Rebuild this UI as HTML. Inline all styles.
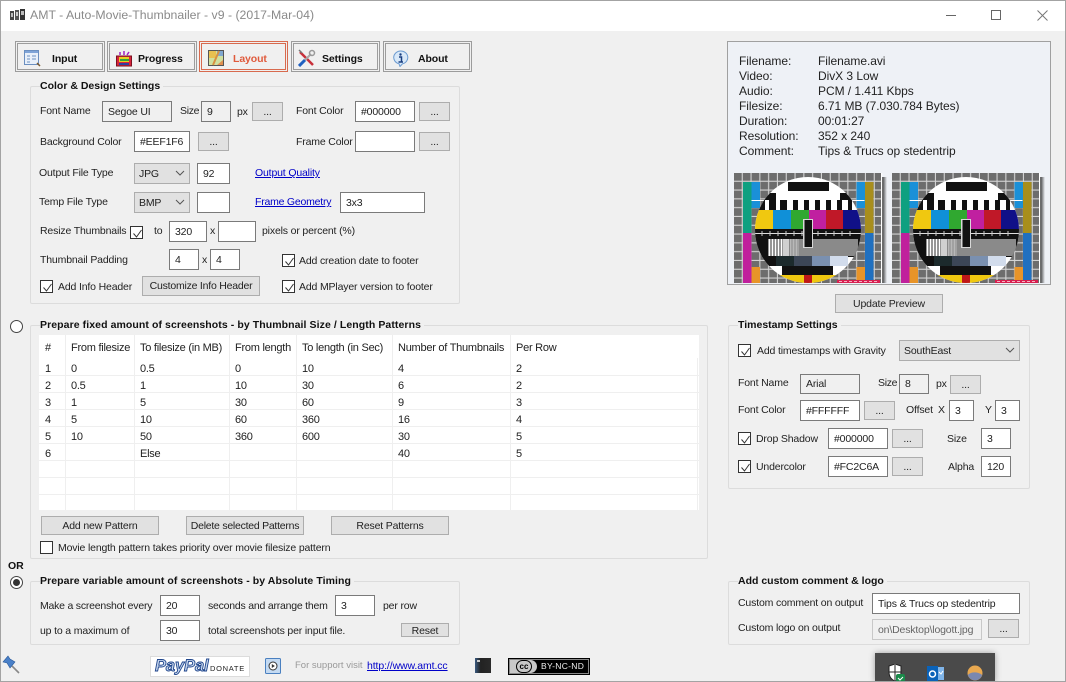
<!DOCTYPE html>
<html><head><meta charset="utf-8"><title>AMT</title>
<style>
html,body{margin:0;padding:0}
body{width:1066px;height:682px;overflow:hidden;position:relative;background:#f0f0f0;font:10.5px/14px "Liberation Sans",sans-serif;letter-spacing:-.16px;color:#222}
#win{position:absolute;left:0;top:0;width:1066px;height:682px;box-sizing:border-box;border:1px solid #a3a3a3;pointer-events:none}
#tb{position:absolute;left:0;top:0;width:1066px;height:31px;background:#fff}
.t,.g,.i,.b,.s,.c,.r,.tab,.a{position:absolute;box-sizing:border-box;white-space:nowrap}
.t{margin-top:1px}
.g{border:1px solid #dcdcdc;border-radius:2px}
.h{position:absolute;left:9px;top:-8px;background:#f0f0f0;font-weight:bold;font-size:10.5px;letter-spacing:0;line-height:14px;color:#111;padding-right:3px;white-space:nowrap}
.i{background:#fff;border:1px solid #7a7a7a;padding-left:5px;line-height:20px;color:#222;height:21px}
.ro{background:#f0f0f0}
.b{background:#e1e1e1;border:1px solid #adadad;text-align:center;height:19px;line-height:18px;color:#222}
.s{background:#e1e1e1;border:1px solid #adadad;padding-left:4px;height:21px;line-height:21px}
.s svg{position:absolute;right:4px;top:6px}
.c{width:13px;height:13px;border:1px solid #333;background:#fff}
.c svg{position:absolute;left:1px;top:1px}
.r{width:13px;height:13px;border:1px solid #444;border-radius:50%;background:#fff}
.tab{height:31px;border:1px solid #9c9c9c;padding:0}
.tab div{position:absolute;left:1px;top:1px;right:1px;bottom:1px;border:1px solid #9c9c9c;background:#f0f0f0}
.tab b{position:absolute;top:8px;font-size:10.5px;letter-spacing:-.1px;color:#111}
.tab svg{position:absolute;top:6px}
a{color:#0000c8;text-decoration:underline}
.cell{position:absolute;line-height:14px;white-space:nowrap;color:#222;font-size:11px;letter-spacing:-.25px;margin-top:1px}
</style></head><body>
<div id="tb"></div>

<svg class="a" style="left:10px;top:9px" width="15" height="12" viewBox="0 0 15 12"><rect x="0" y="2" width="4" height="9" fill="#444"/><rect x="5" y="1" width="4" height="10" fill="#555"/><rect x="10" y="0" width="5" height="11" fill="#333"/><rect x="1" y="4" width="2" height="4" fill="#bbb"/><rect x="6" y="3" width="2" height="4" fill="#ccc"/><rect x="11" y="2" width="3" height="4" fill="#bbb"/></svg>
<span class="t" style="left:30px;top:7px;font-size:12.3px;color:#8a8a8a;letter-spacing:0">AMT - Auto-Movie-Thumbnailer - v9 - (2017-Mar-04)</span>
<div class="a" style="left:946px;top:15px;width:10px;height:1px;background:#666"></div>
<div class="a" style="left:991px;top:10px;width:10px;height:10px;border:1px solid #666"></div>
<svg class="a" style="left:1037px;top:10px" width="11" height="11" viewBox="0 0 11 11"><path d="M.5.5l10 10M10.500.5l-10 10" stroke="#777" stroke-width="1" fill="none"/></svg>

<!-- Tabs -->
<div class="tab" style="left:15px;top:41px;width:90px"><div><svg style="left:6px" width="17" height="17" viewBox="0 0 17 17"><rect x=".5" y=".5" width="14" height="14" fill="#e8f0fa" stroke="#6b8fc0"/><rect x="1" y="1" width="13" height="2" fill="#7fa4d8"/><path d="M3 6h3M8 6h4M3 9h3M8 9h4M3 12h3" stroke="#6b8fc0"/><path d="M13 13l3 3" stroke="#7a5a30" stroke-width="1.500"/></svg><b style="left:34px">Input</b></div></div>
<div class="tab" style="left:107px;top:41px;width:90px"><div><svg style="left:6px" width="17" height="17" viewBox="0 0 17 17"><rect x=".5" y="6" width="15" height="10" fill="#d8243c" stroke="#7a1020"/><rect x="3" y="7" width="10" height="5" fill="#e8d020"/><rect x="4" y="9" width="9" height="2" fill="#30a040"/><rect x="3" y="13" width="10" height="2" fill="#3040a0"/><path d="M4 5V2M8 5V1M11 5l2-3" stroke="#a020c0" stroke-width="1.500"/></svg><b style="left:28px">Progress</b></div></div>
<div class="tab" style="left:199px;top:41px;width:89px;border-color:#d86a4e"><div style="border-color:#d86a4e"><svg style="left:6px" width="17" height="17" viewBox="0 0 17 17"><rect x=".5" y=".5" width="15" height="15" fill="#cfe0a0" stroke="#555"/><path d="M1 1h7v7H1z" fill="#e8c050"/><path d="M9 1h6v5H9z" fill="#80a8d0"/><path d="M5 15L11 1" stroke="#d89040" stroke-width="2"/><path d="M9 15h6v-5z" fill="#e09050"/></svg><b style="left:31px;color:#e05a3c">Layout</b></div></div>
<div class="tab" style="left:291px;top:41px;width:89px"><div><svg style="left:4px;top:5px" width="18" height="18" viewBox="0 0 18 18"><path d="M2 3l13 13" stroke="#c8303a" stroke-width="2.500"/><path d="M1 17L7 11" stroke="#2060c0" stroke-width="3"/><path d="M7 11l6-6" stroke="#a8a8a8" stroke-width="2"/><circle cx="14" cy="4" r="2.500" fill="none" stroke="#999" stroke-width="1.500"/><path d="M1 1l3 3" stroke="#777" stroke-width="1.500"/></svg><b style="left:28px">Settings</b></div></div>
<div class="tab" style="left:383px;top:41px;width:89px"><div><svg style="left:6px" width="17" height="17" viewBox="0 0 17 17"><path d="M8.500 1a7 6.500 0 0 1 2 12.800L8 16.500l-1-2.700A7 6.500 0 0 1 8.500 1z" fill="#d8e8f8" stroke="#6a9ad0"/><circle cx="8.500" cy="4.500" r="1.200" fill="#1a3f80"/><path d="M7 7h2.500v5H11M6.500 12H10" stroke="#1a3f80" stroke-width="1.500" fill="none"/></svg><b style="left:32px">About</b></div></div>

<!-- Color & Design -->
<div class="g" style="left:30px;top:86px;width:430px;height:218px"><div class="h">Color &amp; Design Settings</div></div>
<span class="t" style="left:40px;top:103px">Font Name</span>
<div class="i ro" style="left:102px;top:101px;width:70px">Segoe UI</div>
<span class="t" style="left:180px;top:103px;letter-spacing:-.3px">Size</span>
<div class="i ro" style="left:201px;top:101px;width:30px">9</div>
<span class="t" style="left:237px;top:104px">px</span>
<div class="b" style="left:252px;top:102px;width:31px">...</div>
<span class="t" style="left:296px;top:103px">Font Color</span>
<div class="i" style="left:355px;top:101px;width:60px">#000000</div>
<div class="b" style="left:419px;top:102px;width:31px">...</div>

<span class="t" style="left:40px;top:134px">Background Color</span>
<div class="i" style="left:134px;top:131px;width:56px">#EEF1F6</div>
<div class="b" style="left:198px;top:132px;width:31px">...</div>
<span class="t" style="left:296px;top:134px">Frame Color</span>
<div class="i" style="left:355px;top:131px;width:60px"></div>
<div class="b" style="left:419px;top:132px;width:31px">...</div>

<span class="t" style="left:39px;top:165px">Output File Type</span>
<div class="s" style="left:134px;top:163px;width:56px">JPG<svg width="10" height="7"><path d="M1 1l4 4 4-4" stroke="#555" fill="none"/></svg></div>
<div class="i" style="left:197px;top:163px;width:33px">92</div>
<a class="t" style="left:255px;top:165px">Output Quality</a>

<span class="t" style="left:39px;top:194px">Temp File Type</span>
<div class="s" style="left:134px;top:192px;width:56px">BMP<svg width="10" height="7"><path d="M1 1l4 4 4-4" stroke="#555" fill="none"/></svg></div>
<div class="i" style="left:197px;top:192px;width:33px"></div>
<a class="t" style="left:255px;top:194px;letter-spacing:-.22px">Frame Geometry</a>
<div class="i" style="left:340px;top:192px;width:85px">3x3</div>

<span class="t" style="left:40px;top:223px">Resize Thumbnails</span>
<div class="c" style="left:130px;top:226px"><svg width="11" height="11"><path d="M1.500 5.500l3 3.500 5-7" stroke="#333" fill="none"/></svg></div>
<span class="t" style="left:154px;top:223px">to</span>
<div class="i" style="left:169px;top:221px;width:38px">320</div>
<span class="t" style="left:210px;top:223px">x</span>
<div class="i" style="left:218px;top:221px;width:38px"></div>
<span class="t" style="left:262px;top:223px">pixels or percent (%)</span>

<span class="t" style="left:40px;top:252px">Thumbnail Padding</span>
<div class="i" style="left:169px;top:249px;width:30px">4</div>
<span class="t" style="left:202px;top:252px">x</span>
<div class="i" style="left:210px;top:249px;width:30px">4</div>
<div class="c" style="left:282px;top:254px"><svg width="11" height="11"><path d="M1.500 5.500l3 3.500 5-7" stroke="#333" fill="none"/></svg></div>
<span class="t" style="left:299px;top:253px">Add creation date to footer</span>

<div class="c" style="left:40px;top:280px"><svg width="11" height="11"><path d="M1.500 5.500l3 3.500 5-7" stroke="#333" fill="none"/></svg></div>
<span class="t" style="left:58px;top:279px">Add Info Header</span>
<div class="b" style="left:142px;top:276px;width:118px;height:20px;line-height:19px;letter-spacing:-.22px">Customize Info Header</div>
<div class="c" style="left:282px;top:280px"><svg width="11" height="11"><path d="M1.500 5.500l3 3.500 5-7" stroke="#333" fill="none"/></svg></div>
<span class="t" style="left:299px;top:279px">Add MPlayer version to footer</span>

<!-- Pattern group -->
<div class="r" style="left:10px;top:320px"></div>
<div class="g" style="left:30px;top:325px;width:678px;height:234px"><div class="h" style="letter-spacing:.08px">Prepare fixed amount of screenshots - by Thumbnail Size / Length Patterns</div></div>
<div class="a" style="left:39px;top:335px;width:660px;height:175px;background:#fff;overflow:hidden">
<svg style="position:absolute;left:0;top:0" width="660" height="175"><path d="M0 40.500h660M0 57.500h660M0 74.500h660M0 91.500h660M0 108.500h660M0 125.500h660M0 142.500h660M0 159.500h660M26.500 23v152M95.500 23v152M190.500 23v152M257.500 23v152M353.500 23v152M471.500 23v152M658.500 23v152" stroke="#efefef" fill="none"/><path d="M26.500 0v25M95.500 0v25M190.500 0v25M257.500 0v25M353.500 0v25M471.500 0v25" stroke="#eeeeee" fill="none"/></svg>
<span class="cell" style="left:6px;top:5px">#</span><span class="cell" style="left:32px;top:5px">From filesize</span><span class="cell" style="left:101px;top:5px">To filesize (in MB)</span><span class="cell" style="left:196px;top:5px">From length</span><span class="cell" style="left:263px;top:5px">To length (in Sec)</span><span class="cell" style="left:359px;top:5px">Number of Thumbnails</span><span class="cell" style="left:477px;top:5px">Per Row</span>

<span class="cell" style="left:6px;top:26px">1</span><span class="cell" style="left:32px;top:26px">0</span><span class="cell" style="left:101px;top:26px">0.5</span><span class="cell" style="left:196px;top:26px">0</span><span class="cell" style="left:263px;top:26px">10</span><span class="cell" style="left:359px;top:26px">4</span><span class="cell" style="left:477px;top:26px">2</span>
<span class="cell" style="left:6px;top:43px">2</span><span class="cell" style="left:32px;top:43px">0.5</span><span class="cell" style="left:101px;top:43px">1</span><span class="cell" style="left:196px;top:43px">10</span><span class="cell" style="left:263px;top:43px">30</span><span class="cell" style="left:359px;top:43px">6</span><span class="cell" style="left:477px;top:43px">2</span>
<span class="cell" style="left:6px;top:60px">3</span><span class="cell" style="left:32px;top:60px">1</span><span class="cell" style="left:101px;top:60px">5</span><span class="cell" style="left:196px;top:60px">30</span><span class="cell" style="left:263px;top:60px">60</span><span class="cell" style="left:359px;top:60px">9</span><span class="cell" style="left:477px;top:60px">3</span>
<span class="cell" style="left:6px;top:77px">4</span><span class="cell" style="left:32px;top:77px">5</span><span class="cell" style="left:101px;top:77px">10</span><span class="cell" style="left:196px;top:77px">60</span><span class="cell" style="left:263px;top:77px">360</span><span class="cell" style="left:359px;top:77px">16</span><span class="cell" style="left:477px;top:77px">4</span>
<span class="cell" style="left:6px;top:94px">5</span><span class="cell" style="left:32px;top:94px">10</span><span class="cell" style="left:101px;top:94px">50</span><span class="cell" style="left:196px;top:94px">360</span><span class="cell" style="left:263px;top:94px">600</span><span class="cell" style="left:359px;top:94px">30</span><span class="cell" style="left:477px;top:94px">5</span>
<span class="cell" style="left:6px;top:111px">6</span><span class="cell" style="left:101px;top:111px">Else</span><span class="cell" style="left:359px;top:111px">40</span><span class="cell" style="left:477px;top:111px">5</span>
</div>
<div class="b" style="left:41px;top:516px;width:118px">Add new Pattern</div>
<div class="b" style="left:186px;top:516px;width:118px;letter-spacing:-.25px">Delete selected Patterns</div>
<div class="b" style="left:331px;top:516px;width:118px">Reset Patterns</div>
<div class="c" style="left:40px;top:541px"></div>
<span class="t" style="left:58px;top:540px">Movie length pattern takes priority over movie filesize pattern</span>

<span class="t" style="left:8px;top:558px;font-weight:bold;font-size:10.5px;letter-spacing:0;color:#111">OR</span>
<div class="r" style="left:10px;top:576px"><div class="a" style="left:2px;top:2px;width:7px;height:7px;border-radius:50%;background:#333"></div></div>

<!-- Variable group -->
<div class="g" style="left:30px;top:581px;width:430px;height:64px"><div class="h" style="letter-spacing:.08px">Prepare variable amount of screenshots - by Absolute Timing</div></div>
<span class="t" style="left:40px;top:598px;letter-spacing:-.22px">Make a screenshot every</span>
<div class="i" style="left:160px;top:595px;width:40px">20</div>
<span class="t" style="left:208px;top:598px;letter-spacing:-.22px">seconds and arrange them</span>
<div class="i" style="left:335px;top:595px;width:40px">3</div>
<span class="t" style="left:383px;top:598px">per row</span>
<span class="t" style="left:40px;top:623px">up to a maximum of</span>
<div class="i" style="left:160px;top:620px;width:40px">30</div>
<span class="t" style="left:208px;top:623px">total screenshots per input file.</span>
<div class="b" style="left:401px;top:623px;width:48px;height:14px;line-height:14px">Reset</div>

<!-- Footer -->
<svg class="a" style="left:2px;top:655px" width="19" height="19" viewBox="0 0 19 19"><path d="M1 7L6 1l2 3 5 3-5 6-3-5z" fill="#4a80c8" stroke="#2a5a9a" stroke-width=".6"/><path d="M10 11l7 7" stroke="#888" stroke-width="1.600"/></svg>
<div class="a" style="left:150px;top:656px;width:100px;height:21px;background:#fff;border:1px solid #dcdcdc"></div>
<span class="a" style="left:155px;top:657px;font:italic bold 16.500px/18px 'Liberation Sans',sans-serif;color:#c6d6ee;-webkit-text-stroke:.9px #20468c;letter-spacing:-.1px">PayPal</span>
<span class="t" style="left:210px;top:661px;font-size:7.500px;line-height:14px;letter-spacing:.7px;color:#222">DONATE</span>
<svg class="a" style="left:265px;top:658px" width="16" height="16" viewBox="0 0 16 16"><rect x=".5" y=".5" width="15" height="15" rx="1" fill="#c4daf2" stroke="#4a80c0"/><circle cx="8" cy="8" r="4" fill="#fff" stroke="#333"/><path d="M6.800 6l3 2-3 2z" fill="#333"/></svg>
<span class="t" style="left:295px;top:658px;color:#999;letter-spacing:0;font-size:9.500px">For support visit</span>
<a class="t" style="left:367px;top:658px;font-size:10.500px;letter-spacing:-.1px">http://www.amt.cc</a>
<div class="a" style="left:475px;top:658px;width:16px;height:15px;background:linear-gradient(90deg,#3a5a80,#222 35%,#2a2a2a);"><span style="position:absolute;left:2px;top:2px;width:3px;height:2px;background:#ccc"></span></div>
<div class="a" style="left:509px;top:659px;width:80px;height:15px;background:#000;border:1px solid #888;outline:1px solid #000"></div>
<div class="a" style="left:510px;top:660px;width:27px;height:13px;background:#c8c8c8;border-radius:0 7px 7px 0"></div>
<span class="a" style="left:516px;top:660px;width:16px;height:13px;line-height:11px;border:1px solid #000;border-radius:7px;font-weight:bold;font-size:8px;letter-spacing:0;text-align:center;color:#000">cc</span>
<span class="a" style="left:541px;top:660px;font-size:8.500px;line-height:13px;color:#eee;letter-spacing:.3px">BY-NC-ND</span>

<!-- Preview -->
<div class="a" style="left:727px;top:41px;width:324px;height:244px;background:#eef1f6;border:1px solid #a0a0a0"></div>
<div class="a" style="left:739px;top:54px;font-size:12px;letter-spacing:-.05px;line-height:15px;color:#222">Filename:<br>Video:<br>Audio:<br>Filesize:<br>Duration:<br>Resolution:<br>Comment:</div>
<div class="a" style="left:818px;top:54px;font-size:12px;letter-spacing:-.05px;line-height:15px;color:#222">Filename.avi<br>DivX 3 Low<br>PCM / 1.411 Kbps<br>6.71 MB (7.030.784 Bytes)<br>00:01:27<br>352 x 240<br>Tips &amp; Trucs op stedentrip</div>

<svg width="0" height="0" style="position:absolute"><defs>
<pattern id="gr" x="0" y="0" width="8.800" height="8.800" patternUnits="userSpaceOnUse"><rect width="8.800" height="8.800" fill="#d4d4d4"/><rect width="7.700" height="7.700" fill="#6d6d6d"/></pattern>
<clipPath id="cp"><circle cx="74" cy="57" r="53"/></clipPath>
<g id="tp">
<rect width="147" height="110" fill="url(#gr)"/>
<rect x="9" y="9" width="8.500" height="51" fill="#0fa080"/><rect x="17.500" y="9" width="8.500" height="26" fill="#1a90d8"/>
<rect x="9" y="60" width="8.500" height="50" fill="#c0209c"/><rect x="17.500" y="94" width="8.500" height="16" fill="#e89428"/>
<rect x="122.500" y="9" width="8.500" height="26" fill="#1a90d8"/><rect x="131" y="9" width="8.500" height="51" fill="#a88e1c"/>
<rect x="131" y="60" width="8.500" height="50" fill="#2070c0"/><rect x="122.500" y="94" width="8.500" height="16" fill="#e89428"/>
<rect x="17.500" y="27" width="113" height="1" fill="#fff"/>
<rect x="147" y="0" width="1.200" height="110" fill="#fff"/>
<g clip-path="url(#cp)">
<rect x="20" y="3" width="108" height="108" fill="#fff"/>
<rect x="54" y="9" width="41" height="9" fill="#111"/>
<path d="M20 20h22v7H20zM106 20h22v7h-22z" fill="#111"/>
<path d="M20 27h108v10H20z" fill="#111"/>
<path d="M31 27h4v10h-4zM42 20h4v17h-4zM53 27h6v10h-6zM64 27h6v10h-6zM75 27h6v10h-6zM86 27h6v10h-6zM97 27h6v10h-6zM108 27h6v10h-6zM118 27h5v10h-5z" fill="#fff"/>
<rect x="21" y="37" width="18" height="19" fill="#f0c810"/><rect x="39" y="37" width="18" height="19" fill="#1090d8"/><rect x="57" y="37" width="18" height="19" fill="#30a830"/><rect x="75" y="37" width="17" height="19" fill="#c020a0"/><rect x="92" y="37" width="17" height="19" fill="#c01828"/><rect x="109" y="37" width="18" height="19" fill="#101088"/>
<rect x="20" y="56" width="108" height="28" fill="#111"/>
<rect x="20" y="60" width="108" height="1" fill="#ddd"/>
<path d="M28 58v5M36 58v5M44 58v5M52 58v5M60 58v5M68 58v5M84 58v5M92 58v5M100 58v5M108 58v5M116 58v5" stroke="#ccc"/>
<rect x="34" y="66" width="90" height="17" fill="#8a8a8a"/>
<path d="M35.500 66v17M38.500 66v17M41.500 66v17M44.500 66v17M47.500 66v17M50 66v17M52 66v17M54 66v17" stroke="#fff" stroke-width="1.200"/>
<path d="M56.500 66v17M58 66v17M59.500 66v17M61 66v17M62.500 66v17M64 66v17" stroke="#ccc" stroke-width=".7"/>
<rect x="69" y="46" width="10" height="29" fill="#d8d8d8"/><rect x="70.500" y="47" width="7.500" height="27" fill="#111"/>
<rect x="24" y="83" width="18" height="10" fill="#111"/><rect x="42" y="83" width="18" height="10" fill="#1c2a2c"/><rect x="60" y="83" width="18" height="10" fill="#3c4656"/><rect x="78" y="83" width="18" height="10" fill="#7a90b0"/><rect x="96" y="83" width="18" height="10" fill="#d2dcec"/>
<rect x="48" y="93" width="51" height="9" fill="#111"/>
<rect x="20" y="102" width="108" height="9" fill="#f0c810"/><rect x="70" y="102" width="8" height="9" fill="#c01818"/>
</g>
<rect x="103" y="107" width="43" height="3" fill="#d82050"/>
<path d="M105 108.500h3M110 108.500h3M115 108.500h3M120 108.500h3M125 108.500h3M130 108.500h3M135 108.500h3M140 108.500h3" stroke="#f4b0c0"/>
</g>
</defs></svg>
<svg class="a" style="left:734px;top:173px" width="154" height="110" viewBox="0 0 154 110"><defs><linearGradient id="sh" x1="0" x2="1"><stop offset="0" stop-color="#333"/><stop offset="1" stop-color="#eef1f6"/></linearGradient></defs><rect x="148" y="4" width="5" height="106" fill="url(#sh)"/><use href="#tp"/></svg>
<svg class="a" style="left:892px;top:173px" width="154" height="110" viewBox="0 0 154 110"><rect x="148" y="4" width="5" height="106" fill="url(#sh)"/><use href="#tp"/></svg>

<div class="b" style="left:835px;top:294px;width:108px;height:19px">Update Preview</div>

<!-- Timestamp -->
<div class="g" style="left:728px;top:325px;width:302px;height:164px"><div class="h">Timestamp Settings</div></div>
<div class="c" style="left:738px;top:344px"><svg width="11" height="11"><path d="M1.500 5.500l3 3.500 5-7" stroke="#333" fill="none"/></svg></div>
<span class="t" style="left:757px;top:343px">Add timestamps with Gravity</span>
<div class="s" style="left:899px;top:340px;width:121px;padding-left:4px">SouthEast<svg width="10" height="7"><path d="M1 1l4 4 4-4" stroke="#555" fill="none"/></svg></div>
<span class="t" style="left:738px;top:375px">Font Name</span>
<div class="i ro" style="left:800px;top:374px;width:60px;height:20px;line-height:18px">Arial</div>
<span class="t" style="left:878px;top:375px;letter-spacing:-.3px">Size</span>
<div class="i ro" style="left:899px;top:374px;width:30px;height:20px;line-height:18px">8</div>
<span class="t" style="left:936px;top:376px">px</span>
<div class="b" style="left:950px;top:375px;width:31px">...</div>
<span class="t" style="left:738px;top:402px">Font Color</span>
<div class="i" style="left:800px;top:400px;width:60px">#FFFFFF</div>
<div class="b" style="left:864px;top:401px;width:31px">...</div>
<span class="t" style="left:906px;top:402px">Offset</span>
<span class="t" style="left:938px;top:402px">X</span>
<div class="i" style="left:949px;top:400px;width:25px">3</div>
<span class="t" style="left:985px;top:402px">Y</span>
<div class="i" style="left:995px;top:400px;width:25px">3</div>
<div class="c" style="left:738px;top:432px"><svg width="11" height="11"><path d="M1.500 5.500l3 3.500 5-7" stroke="#333" fill="none"/></svg></div>
<span class="t" style="left:756px;top:431px">Drop Shadow</span>
<div class="i" style="left:828px;top:428px;width:60px">#000000</div>
<div class="b" style="left:892px;top:429px;width:31px">...</div>
<span class="t" style="left:947px;top:431px">Size</span>
<div class="i" style="left:981px;top:428px;width:30px">3</div>
<div class="c" style="left:738px;top:460px"><svg width="11" height="11"><path d="M1.500 5.500l3 3.500 5-7" stroke="#333" fill="none"/></svg></div>
<span class="t" style="left:756px;top:459px">Undercolor</span>
<div class="i" style="left:828px;top:456px;width:60px">#FC2C6A</div>
<div class="b" style="left:892px;top:457px;width:31px">...</div>
<span class="t" style="left:948px;top:459px">Alpha</span>
<div class="i" style="left:981px;top:456px;width:30px">120</div>

<!-- Custom comment -->
<div class="g" style="left:728px;top:581px;width:302px;height:64px"><div class="h">Add custom comment &amp; logo</div></div>
<span class="t" style="left:738px;top:595px">Custom comment on output</span>
<div class="i" style="left:872px;top:593px;width:148px">Tips &amp; Trucs op stedentrip</div>
<span class="t" style="left:738px;top:620px">Custom logo on output</span>
<div class="i" style="left:872px;top:619px;width:110px;background:#f0f0f0;border-color:#c8c8c8;color:#666;overflow:hidden">on\Desktop\logott.jpg</div>
<div class="b" style="left:988px;top:619px;width:31px">...</div>

<!-- Tray popup -->
<div class="a" style="left:875px;top:653px;width:120px;height:29px;background:#4a4a4a;box-shadow:0 0 6px rgba(0,0,0,.35)"></div>
<svg class="a" style="left:887px;top:664px" width="18" height="18" viewBox="0 0 18 18"><path d="M8 0l6 2v6c0 5-3 8-6 9-3-1-6-4-6-9V2z" fill="#fff" stroke="#222"/><path d="M8 1v15M2 8h12" stroke="#222"/><rect x="9" y="10" width="9" height="8" rx="2" fill="#1a8a4a"/><path d="M11 14l2 2 3-3" stroke="#fff" fill="none"/></svg>
<svg class="a" style="left:927px;top:666px" width="17" height="16" viewBox="0 0 17 16"><rect x="7" y="1" width="10" height="13" fill="#7fb4e8"/><rect x="0" y="0" width="11" height="16" fill="#0a62b8"/><circle cx="5.500" cy="8" r="3" fill="none" stroke="#fff" stroke-width="1.500"/><path d="M12 6l2 2 2-3" stroke="#fff" fill="none"/></svg>
<svg class="a" style="left:967px;top:665px" width="16" height="16" viewBox="0 0 16 16"><circle cx="8" cy="8" r="7.500" fill="#e8a850"/><path d="M.8 10C4 6.500 11 6.500 15.200 10A7.500 7.500 0 0 1 .8 10z" fill="#7a88b0"/></svg>

<div id="win"></div>
</body></html>
